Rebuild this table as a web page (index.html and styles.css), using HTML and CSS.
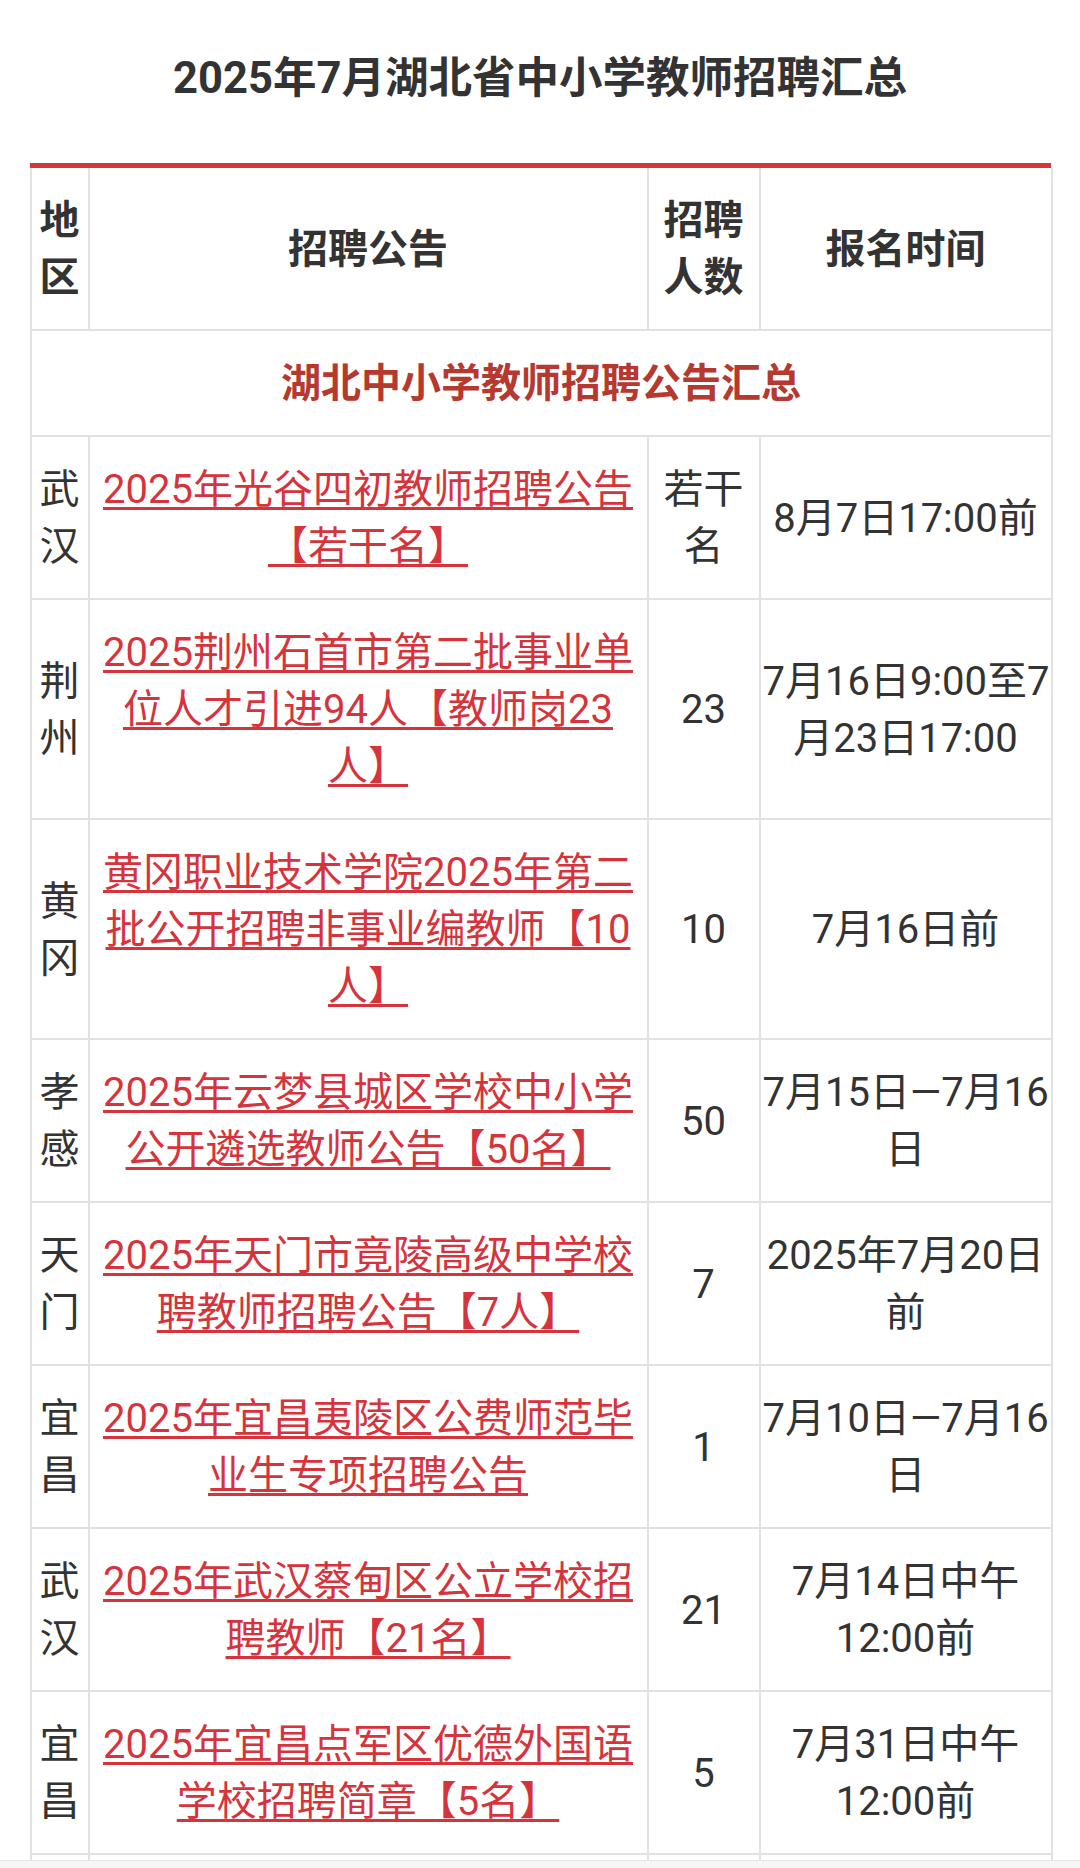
FILE: index.html
```html
<!DOCTYPE html>
<html lang="zh-CN">
<head>
<meta charset="utf-8">
<title>2025年7月湖北省中小学教师招聘汇总</title>
<link rel="stylesheet" href="styles.css">
</head>
<body>
<h1 class="title">2025年7月湖北省中小学教师招聘汇总</h1>
<div class="table-wrap">
  <table class="jobs">
    <colgroup>
      <col class="c-area">
      <col class="c-notice">
      <col class="c-num">
      <col class="c-time">
    </colgroup>
    <thead>
      <tr class="head">
        <th>地区</th>
        <th>招聘公告</th>
        <th>招聘人数</th>
        <th>报名时间</th>
      </tr>
    </thead>
    <tbody>
      <tr>
        <td colspan="4" class="section">湖北中小学教师招聘公告汇总</td>
      </tr>
      <tr>
        <td class="area">武汉</td>
        <td class="notice"><a href="#">2025年光谷四初教师招聘公告<br>【若干名】</a></td>
        <td class="num">若干名</td>
        <td class="time">8月7日17:00前</td>
      </tr>
      <tr>
        <td class="area">荆州</td>
        <td class="notice"><a href="#">2025荆州石首市第二批事业单<br>位人才引进94人【教师岗23<br>人】</a></td>
        <td class="num">23</td>
        <td class="time">7月16日9:00至7<br>月23日17:00</td>
      </tr>
      <tr>
        <td class="area">黄冈</td>
        <td class="notice"><a href="#">黄冈职业技术学院2025年第二<br>批公开招聘非事业编教师【10<br>人】</a></td>
        <td class="num">10</td>
        <td class="time">7月16日前</td>
      </tr>
      <tr>
        <td class="area">孝感</td>
        <td class="notice"><a href="#">2025年云梦县城区学校中小学<br>公开遴选教师公告【50名】</a></td>
        <td class="num">50</td>
        <td class="time">7月15日—7月16<br>日</td>
      </tr>
      <tr>
        <td class="area">天门</td>
        <td class="notice"><a href="#">2025年天门市竟陵高级中学校<br>聘教师招聘公告【7人】</a></td>
        <td class="num">7</td>
        <td class="time">2025年7月20日<br>前</td>
      </tr>
      <tr>
        <td class="area">宜昌</td>
        <td class="notice"><a href="#">2025年宜昌夷陵区公费师范毕<br>业生专项招聘公告</a></td>
        <td class="num">1</td>
        <td class="time">7月10日—7月16<br>日</td>
      </tr>
      <tr>
        <td class="area">武汉</td>
        <td class="notice"><a href="#">2025年武汉蔡甸区公立学校招<br>聘教师【21名】</a></td>
        <td class="num">21</td>
        <td class="time">7月14日中午<br>12:00前</td>
      </tr>
      <tr>
        <td class="area">宜昌</td>
        <td class="notice"><a href="#">2025年宜昌点军区优德外国语<br>学校招聘简章【5名】</a></td>
        <td class="num">5</td>
        <td class="time">7月31日中午<br>12:00前</td>
      </tr>
      <tr>
        <td class="area">&nbsp;<br>&nbsp;</td>
        <td class="notice">&nbsp;</td>
        <td class="num">&nbsp;</td>
        <td class="time">&nbsp;</td>
      </tr>
    </tbody>
  </table>
</div>
<div class="bottom-bar"></div>
</body>
</html>
```

FILE: styles.css
```css
html, body {
  margin: 0;
  padding: 0;
  background: #ffffff;
}

body {
  font-family: "Roboto", "Noto Sans CJK SC", "Noto Sans", sans-serif;
  color: #333333;
}

.title {
  margin: 0;
  padding-top: 50px;
  font-size: 43.5px;
  line-height: 58px;
  font-weight: 700;
  text-align: center;
  color: #333333;
}

.table-wrap {
  width: 1021px;
  margin: 55px auto 0;
  border-top: 5px solid #d7373b;
}

.jobs {
  width: 100%;
  border-collapse: collapse;
  table-layout: fixed;
  font-size: 40px;
  line-height: 57px;
}

.c-area { width: 58px; }
.c-notice { width: 559px; }
.c-num { width: 112px; }
.c-time { width: 292px; }

.jobs th,
.jobs td {
  border: 2px solid #e1e1e1;
  padding: 24px 2px 23px;
  text-align: center;
  vertical-align: middle;
}

.jobs .head th {
  border-top: none;
  font-weight: 700;
  color: #333333;
}

.jobs .section {
  font-weight: 700;
  color: #b5392f;
}

.jobs .area {
  padding-left: 0;
  padding-right: 0;
}

.jobs .notice {
  padding-left: 10px;
  padding-right: 10px;
  white-space: nowrap;
}

.jobs .notice a {
  color: #d6343c;
  text-decoration: underline;
  text-decoration-color: #d6343c;
  text-decoration-thickness: 3px;
  text-underline-offset: 4px;
  text-decoration-skip-ink: none;
}

.jobs .time {
  white-space: nowrap;
}

.bottom-bar {
  position: fixed;
  left: 0;
  right: 0;
  bottom: 0;
  height: 7px;
  border-top: 1px solid #e4e4e4;
  background: #f6f6f6;
}
```
